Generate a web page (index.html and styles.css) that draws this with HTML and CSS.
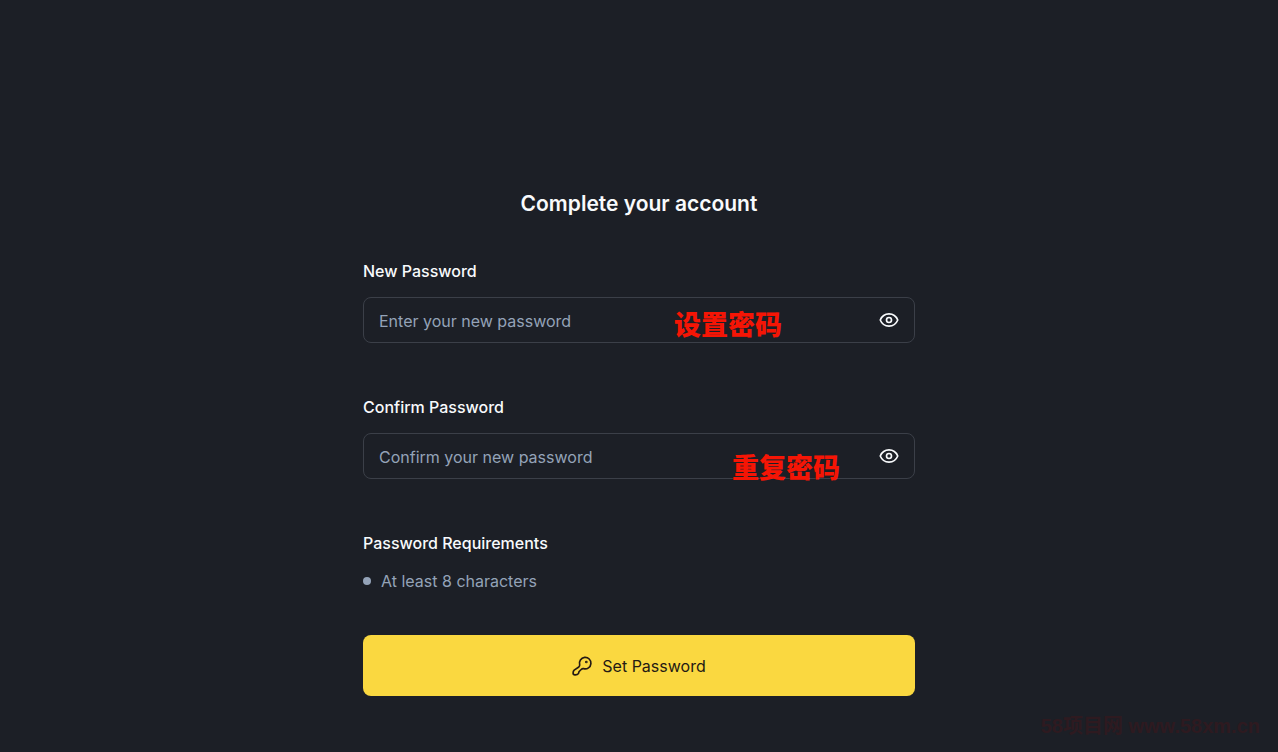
FILE: index.html
```html
<!DOCTYPE html>
<html lang="en">
<head>
    <meta charset="UTF-8">
    <meta name="viewport" content="width=device-width, initial-scale=1.0">
    <title>Complete your account</title>
    <link rel="stylesheet" href="styles.css">
</head>
<body>
    <main class="account">
        <h1 class="account-title">Complete your account</h1>
        <form class="account-form">
            <div class="field">
                <label class="field-label" for="new-password">New Password</label>
                <div class="input-box">
                    <input class="input" type="password" id="new-password" placeholder="Enter your new password">
                    <button class="toggle" type="button" aria-label="Show password">
                        <svg class="icon" viewBox="0 0 24 24">
                            <path d="M1.500 12C3.500 7.200 7.500 4.700 12 4.700s8.500 2.500 10.500 7.300c-2 4.800-6 7.300-10.500 7.300S3.500 16.800 1.500 12z"/>
                            <circle cx="12" cy="12" r="3"/>
                        </svg>
                    </button>
                    <span class="note note-set" lang="zh">设置密码</span>
                </div>
            </div>

            <div class="field">
                <label class="field-label" for="confirm-password">Confirm Password</label>
                <div class="input-box">
                    <input class="input" type="password" id="confirm-password" placeholder="Confirm your new password">
                    <button class="toggle" type="button" aria-label="Show password">
                        <svg class="icon" viewBox="0 0 24 24">
                            <path d="M1.500 12C3.500 7.200 7.500 4.700 12 4.700s8.500 2.500 10.500 7.300c-2 4.800-6 7.300-10.500 7.300S3.500 16.800 1.500 12z"/>
                            <circle cx="12" cy="12" r="3"/>
                        </svg>
                    </button>
                    <span class="note note-repeat" lang="zh">重复密码</span>
                </div>
            </div>

            <section class="requirements">
                <h2 class="field-label">Password Requirements</h2>
                <ul class="requirements-list">
                    <li>At least 8 characters</li>
                </ul>
            </section>

            <button class="submit" type="submit">
                <svg class="icon" viewBox="0 0 24 24">
                    <path d="M9.200 10.500A6.900 6.900 0 1 1 14 15.200C12.600 15 11.800 15.400 11 16.200L8.600 18.600C7.900 19.300 8.300 20.300 7.600 21.200C6.900 22.300 5.500 22.700 3.500 22.600C1.900 22.600 1.300 21.900 1.300 20.500C1.300 19 1.600 18 2.600 17L8.200 13.200C9 12.400 9.400 11.800 9.200 10.500Z"/>
                    <circle cx="17.200" cy="7.200" r="0.600"/>
                </svg>
                Set Password
            </button>
        </form>
    </main>
    <div class="watermark" lang="zh">58项目网 www.58xm.cn</div>
</body>
</html>
```

FILE: styles.css
```css
* {
    box-sizing: border-box;
}

body {
    margin: 0;
    min-height: 100vh;
    background-color: #1c1f26;
    color: #f8fafc;
    font-family: Inter, "Noto Sans CJK SC", sans-serif;
    font-size: 16px;
    line-height: 24px;
}

.account {
    max-width: 584px;
    margin: 0 auto;
    padding: 188px 16px 56px;
}

.account-title {
    margin: 0 0 39px;
    font-size: 21px;
    line-height: 32px;
    font-weight: 600;
    text-align: center;
}

.field {
    margin-bottom: 52px;
}

.field-label {
    display: block;
    margin: 0 0 14px;
    font-size: 16px;
    font-weight: 500;
}

.input-box {
    position: relative;
    display: flex;
    align-items: center;
    height: 46px;
    padding: 0 15px;
    border: 1px solid #3b3f48;
    border-radius: 8px;
}

.input {
    flex: 1;
    min-width: 0;
    padding: 2px 0 0;
    border: 0;
    outline: 0;
    background: transparent;
    color: #f8fafc;
    font: inherit;
}

.input::placeholder {
    color: #94a3b8;
    opacity: 1;
}

.toggle {
    display: flex;
    padding: 0;
    border: 0;
    background: transparent;
    color: #f8fafc;
    cursor: pointer;
}

.icon {
    width: 20px;
    height: 20px;
    fill: none;
    stroke: currentColor;
    stroke-width: 2;
    stroke-linecap: round;
    stroke-linejoin: round;
}

/* Red notes written over the fields */
.note {
    position: absolute;
    color: #f51505;
    font-family: "Noto Sans CJK SC", sans-serif;
    font-size: 27px;
    line-height: 32px;
    font-weight: 900;
    pointer-events: none;
}

.note-set {
    top: 10px;
    right: 132px;
}

.note-repeat {
    top: 17px;
    right: 74px;
}

.requirements {
    margin-bottom: 42px;
}

.requirements-list {
    margin: 0;
    padding: 0;
    list-style: none;
    color: #94a3b8;
}

.requirements-list li {
    display: flex;
    align-items: center;
    gap: 10px;
}

.requirements-list li::before {
    content: '';
    width: 8px;
    height: 8px;
    border-radius: 50%;
    background-color: #94a3b8;
}

.submit {
    display: flex;
    align-items: center;
    justify-content: center;
    gap: 10px;
    width: 100%;
    min-height: 61px;
    padding: 16px;
    border: 0;
    border-radius: 8px;
    background-color: #fad840;
    color: #241a14;
    font: inherit;
    cursor: pointer;
}

.watermark {
    position: absolute;
    right: 18px;
    bottom: 14px;
    color: #2e1a20;
    font-family: "Liberation Sans", "Noto Sans CJK SC", sans-serif;
    font-size: 20px;
    font-weight: 700;
}
```
